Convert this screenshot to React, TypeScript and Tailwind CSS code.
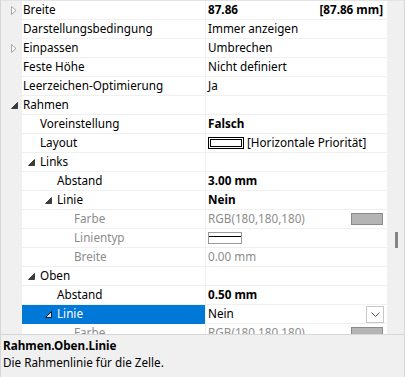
import React from 'react';

type Row = {
  label: string;
  level: number;
  expander?: 'open' | 'closed';
  value?: React.ReactNode;
  bold?: boolean;
  disabled?: boolean;
  selected?: boolean;
};

// Layout-Symbol: Doppelrahmen
const DoubleBox = () => (
  <svg width="36" height="12" viewBox="0 0 36 12" className="shrink-0">
    <rect x="0.5" y="0.5" width="35" height="11" fill="white" stroke="black" />
    <rect x="2.5" y="2.5" width="31" height="7" fill="white" stroke="black" />
  </svg>
);

// Linientyp-Vorschau
const LineBox = () => (
  <svg width="34" height="12" viewBox="0 0 34 12" className="shrink-0">
    <rect x="0.5" y="0.5" width="33" height="11" fill="white" stroke="#9a9a9a" />
    <line x1="1" y1="4.5" x2="33" y2="4.5" stroke="black" />
  </svg>
);

const Swatch = () => (
  <span className="ml-auto mr-[4px] w-[32px] h-[12px] bg-[#b4b4b4] border border-[#8a8a8a]" />
);

const rows: Row[] = [
  {
    label: 'Breite',
    level: 0,
    expander: 'closed',
    bold: true,
    value: (
      <>
        <span>87.86</span>
        <span className="ml-auto mr-[4px]">[87.86 mm]</span>
      </>
    ),
  },
  { label: 'Darstellungsbedingung', level: 0, value: 'Immer anzeigen' },
  { label: 'Einpassen', level: 0, expander: 'closed', value: 'Umbrechen' },
  { label: 'Feste Höhe', level: 0, value: 'Nicht definiert' },
  { label: 'Leerzeichen-Optimierung', level: 0, value: 'Ja' },
  { label: 'Rahmen', level: 0, expander: 'open' },
  { label: 'Voreinstellung', level: 1, value: 'Falsch', bold: true },
  {
    label: 'Layout',
    level: 1,
    value: (
      <>
        <DoubleBox />
        <span className="ml-[3px]">[Horizontale Priorität]</span>
      </>
    ),
  },
  { label: 'Links', level: 1, expander: 'open' },
  { label: 'Abstand', level: 2, value: '3.00 mm', bold: true },
  { label: 'Linie', level: 2, expander: 'open', value: 'Nein', bold: true },
  {
    label: 'Farbe',
    level: 3,
    disabled: true,
    value: (
      <>
        <span>RGB(180,180,180)</span>
        <Swatch />
      </>
    ),
  },
  { label: 'Linientyp', level: 3, disabled: true, value: <LineBox /> },
  { label: 'Breite', level: 3, disabled: true, value: '0.00 mm' },
  { label: 'Oben', level: 1, expander: 'open' },
  { label: 'Abstand', level: 2, value: '0.50 mm', bold: true },
  {
    label: 'Linie',
    level: 2,
    expander: 'open',
    selected: true,
    value: (
      <>
        <span>Nein</span>
        <span className="ml-auto mr-[3px] w-[18px] h-[17px] border border-[#c8c8c8] bg-white flex items-center justify-center">
          <svg width="9" height="5" viewBox="0 0 9 5">
            <path d="M0.5 0.5 L4.5 4.5 L8.5 0.5" fill="none" stroke="#555" />
          </svg>
        </span>
      </>
    ),
  },
  {
    label: 'Farbe',
    level: 3,
    disabled: true,
    value: (
      <>
        <span>RGB(180,180,180)</span>
        <Swatch />
      </>
    ),
  },
];

const Expander = ({ kind, selected }: { kind: 'open' | 'closed'; selected?: boolean }) =>
  kind === 'closed' ? (
    <svg width="6" height="9" viewBox="0 0 6 9">
      <path d="M0.5 0.5 L5 4.5 L0.5 8.5 Z" fill="white" stroke="#a6a6a6" />
    </svg>
  ) : (
    <svg width="7" height="7" viewBox="0 0 7 7">
      <path
        d="M6.5 0.5 L6.5 6.5 L0.5 6.5 Z"
        fill={selected ? '#cfe2f6' : '#3c3c3c'}
        stroke={selected ? '#1c1c1c' : '#3c3c3c'}
      />
    </svg>
  );

export default function App() {
  return (
    <div className="w-[411px] h-[377px] bg-white overflow-hidden font-['Noto_Sans',sans-serif] text-[11.7px] text-black">
      <div className="w-[405px] h-full flex flex-col border-l border-r border-[#d6d6d6]">
        {/* Eigenschaftsraster */}
        <div className="h-[334px] flex border-t border-[#e3e3e3] overflow-hidden">
          <div className="flex-1 flex flex-col">
            {rows.map((r, i) => (
              <div key={i} className="flex h-[19px] shrink-0">
                <div className="w-[21px] bg-[#f0f0f0] relative">
                  {r.level === 0 && r.expander && (
                    <span className="absolute left-[10px] top-0 h-[18px] flex items-center">
                      <Expander kind={r.expander} />
                    </span>
                  )}
                </div>
                <div
                  className={`w-[183px] relative flex items-center border-b whitespace-nowrap ${
                    r.selected
                      ? 'bg-[#0078d7] text-white border-[#0078d7]'
                      : r.disabled
                        ? 'text-[#8c8c8c] border-[#f0f0f0]'
                        : 'border-[#f0f0f0]'
                  }`}
                  style={{ paddingLeft: 1 + 17 * r.level }}
                >
                  {r.level > 0 && r.expander && (
                    <span
                      className="absolute top-0 h-[18px] flex items-center"
                      style={{ left: 17 * r.level - 11 }}
                    >
                      <Expander kind={r.expander} selected={r.selected} />
                    </span>
                  )}
                  {r.label}
                </div>
                <div
                  className={`w-[182px] flex items-center pl-[2px] border-l border-b border-[#f0f0f0] whitespace-nowrap ${
                    r.bold ? 'font-bold' : ''
                  } ${r.disabled ? 'text-[#8c8c8c]' : ''}`}
                >
                  {r.value}
                </div>
              </div>
            ))}
          </div>
          {/* Scrollleiste */}
          <div className="w-[17px] bg-[#f0f0f0] relative">
            <div className="absolute left-[8px] top-[231px] w-[3px] h-[16px] bg-[#858585]" />
          </div>
        </div>

        {/* Beschreibung */}
        <div className="flex-1 bg-[#f0f0f0] border-t border-[#d6d6d6] px-[2px] pt-[2px] leading-[17px]">
          <div className="font-bold">Rahmen.Oben.Linie</div>
          <div>Die Rahmenlinie für die Zelle.</div>
        </div>
      </div>
    </div>
  );
}
